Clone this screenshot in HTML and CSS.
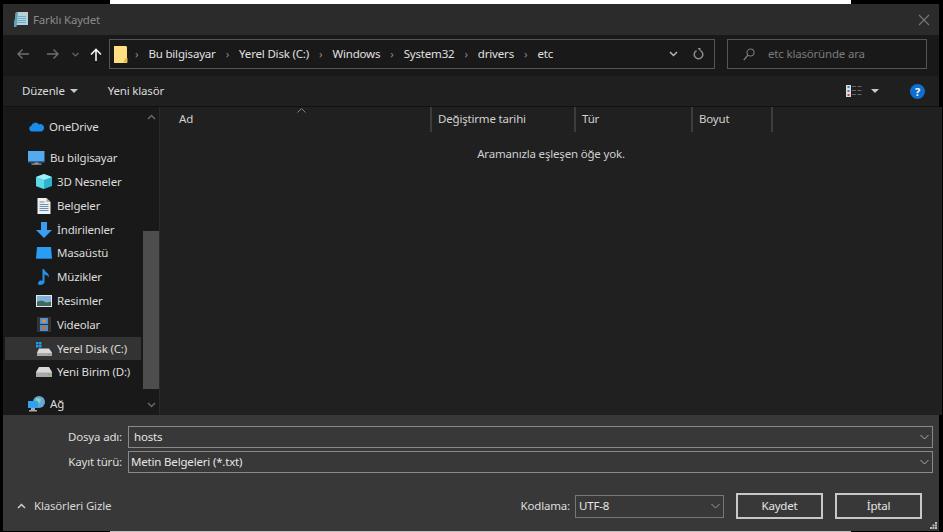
FILE: index.html
```html
<!DOCTYPE html>
<html lang="tr">
<head>
<meta charset="utf-8">
<title>Farklı Kaydet</title>
<link rel="stylesheet" href="styles.css">
</head>
<body>
<div class="strip strip-top"></div>
<div class="window">
  <header class="titlebar">
    <svg class="title-icon" width="16" height="17" viewBox="0 0 16 17"><path d="M3 1h12v13H1z" fill="#a9d6e6"/><path d="M3 1h12v2.500H2.600z" fill="#c9c9c9"/><path d="M5 5.500h8M4.600 7.500h8.400M4.300 9.500h8.700M4 11.500h9" stroke="#7ea9bb"/><path d="M3 1 1 14v2h2.500L5 1z" fill="#5d9fb5"/></svg>
    <span class="title-text">Farklı Kaydet</span>
    <svg class="close" width="12" height="12" viewBox="0 0 12 12"><path d="M1 1l10 10M11 1L1 11" stroke="#777" stroke-width="1.100"/></svg>
  </header>
  <nav class="navbar">
    <svg class="nav-btn" width="14" height="12" viewBox="0 0 14 12"><path d="M13 6H2M6.500 1.500 2 6l4.500 4.500" fill="none" stroke="#6f6f6f" stroke-width="1.400"/></svg>
    <svg class="nav-btn fwd" width="14" height="12" viewBox="0 0 14 12"><path d="M1 6h11M7.500 1.500 12 6l-4.500 4.500" fill="none" stroke="#6f6f6f" stroke-width="1.400"/></svg>
    <svg class="nav-btn drop" width="7" height="5" viewBox="0 0 7 5"><path d="M.5 1 3.500 4 6.500 1" fill="none" stroke="#666" stroke-width="1.200"/></svg>
    <svg class="nav-btn up" width="12" height="13" viewBox="0 0 12 13"><path d="M6 13V2M1 6.500 6 1.500l5 5" fill="none" stroke="#f2f2f2" stroke-width="1.600"/></svg>
    <div class="address">
      <svg class="addr-folder" width="14" height="17" viewBox="0 0 14 17"><path d="M0 0h12l1 1v16H0z" fill="#ffdf80"/><path d="M12 12h1.500v4.500H9z" fill="#e3b94e"/></svg>
      <span class="crumb-sep first">›</span>
      <span class="crumb">Bu bilgisayar</span><span class="crumb-sep">›</span>
      <span class="crumb">Yerel Disk (C:)</span><span class="crumb-sep">›</span>
      <span class="crumb">Windows</span><span class="crumb-sep">›</span>
      <span class="crumb">System32</span><span class="crumb-sep">›</span>
      <span class="crumb">drivers</span><span class="crumb-sep">›</span>
      <span class="crumb">etc</span>
      <svg class="addr-drop" width="9" height="6" viewBox="0 0 9 6"><path d="M1 1l3.500 3.500L8 1" fill="none" stroke="#b5b5b5" stroke-width="1.500"/></svg>
      <svg class="addr-refresh" width="11" height="12" viewBox="0 0 11 12"><path d="M7.500 2.600A4.300 4.300 0 1 1 3.500 2.600" fill="none" stroke="#8d8d8d" stroke-width="1.500"/><path d="M3.500 0l3 0 0 3.500z" fill="#8d8d8d" transform="translate(1 0)"/></svg>
    </div>
    <div class="search">
      <svg width="12" height="13" viewBox="0 0 12 13"><circle cx="7.500" cy="4.500" r="3.500" fill="none" stroke="#7a7a7a" stroke-width="1.100"/><path d="M5 7 .8 12" stroke="#7a7a7a" stroke-width="1.300"/></svg>
      <span>etc klasöründe ara</span>
    </div>
  </nav>
  <div class="toolbar">
    <span class="tool">Düzenle</span>
    <i class="caret"></i>
    <span class="tool new-folder">Yeni klasör</span>
    <svg class="view-icon" width="16" height="12" viewBox="0 0 16 12"><rect width="5" height="12" fill="#ddd"/><rect x="1.500" y="1" width="2" height="2" fill="#3b7fd0"/><rect x="1.500" y="5" width="2" height="2" fill="#3b7fd0"/><rect x="1.500" y="9" width="2" height="2" fill="#d33"/><path d="M6 1.500h4M11.500 1.500h4M6 5.500h4M11.500 5.500h4M6 9.500h4M11.500 9.500h4" stroke="#666"/></svg>
    <i class="caret view-caret"></i>
    <span class="help">?</span>
  </div>
  <div class="main">
    <aside class="sidebar">
      <ul class="tree">
        <li class="row group top"><svg width="16" height="11" viewBox="0 0 16 11"><path d="M3.500 10.500A3 3 0 0 1 3.300 4.700 4.300 4.300 0 0 1 11 3.500 3.500 3.500 0 0 1 16 7a3.500 3.500 0 0 1-3 3.500z" fill="#1a8ce8"/></svg><span>OneDrive</span></li>
        <li class="row group"><svg width="17" height="14" viewBox="0 0 17 14"><rect x="0" y="0" width="16.500" height="10.500" fill="#55a9ee"/><rect x="0" y="10.500" width="16.500" height="1" fill="#2f6fa8"/><path d="M6.500 11.500h4v1h3v1.300H3.500v-1.300h3z" fill="#9b9b9b"/></svg><span>Bu bilgisayar</span></li>
        <li class="row sub"><svg width="16" height="15" viewBox="0 0 16 15"><path d="M8 0l8 3v9l-8 3-8-3V3z" fill="#2bb4cf"/><path d="M8 0l8 3-8 3-8-3z" fill="#9ff0f5"/><path d="M0 3l8 3v9l-8-3z" fill="#5fd8e6"/></svg><span>3D Nesneler</span></li>
        <li class="row sub"><svg width="13" height="16" viewBox="0 0 13 16"><path d="M0 0h9l4 4v12H0z" fill="#f0f0f0"/><path d="M9 0l4 4H9z" fill="#aaa"/><path d="M2 4h5M2 6.500h9M2 8.500h9M2 10.500h9M2 12.500h9" stroke="#6a8fb5"/></svg><span>Belgeler</span></li>
        <li class="row sub"><svg width="16" height="16" viewBox="0 0 16 16"><path d="M5 0h6v8h5l-8 8-8-8h5z" fill="#3b9cf0"/></svg><span>İndirilenler</span></li>
        <li class="row sub"><svg width="16" height="12" viewBox="0 0 16 12"><path d="M1 0h14l1 12H0z" fill="#2a9cf2"/><path d="M0 11h16v1H0z" fill="#1678c4"/></svg><span>Masaüstü</span></li>
        <li class="row sub"><svg width="13" height="16" viewBox="0 0 13 16"><path d="M5 0h1.500c.5 3 5.500 4 5 8.500C10.800 6.500 8.500 6 7 5.500V13c0 2-2.500 3-4.500 3S0 14.500 1 13s3-1.700 4-1z" fill="#2293ec"/></svg><span>Müzikler</span></li>
        <li class="row sub"><svg width="16" height="12" viewBox="0 0 16 12"><rect width="16" height="12" fill="#e6e6e6"/><rect x="1" y="1" width="14" height="10" fill="#7fb3da"/><path d="M1 7c3-2 6-1 8 0s4 0 6-.5V11H1z" fill="#3f6a60"/></svg><span>Resimler</span></li>
        <li class="row sub"><svg width="14" height="15" viewBox="0 0 14 15"><rect width="14" height="15" fill="#333"/><rect x="3" y="1" width="8" height="6" fill="#4a8fd8"/><rect x="3" y="8" width="8" height="6" fill="#4a8fd8"/><rect x="5" y="2.500" width="4" height="3" fill="#d9933a"/><rect x="5" y="9.500" width="4" height="3" fill="#c9702a"/></svg><span>Videolar</span></li>
        <li class="row sub selected"><svg width="16" height="14" viewBox="0 0 16 14"><path d="M0 0h2.500v2.500H0zM3 0h2.500v2.500H3zM0 3h2.500v2.500H0zM3 3h2.500v2.500H3z" fill="#18a0e8"/><path d="M3 6.500h10l3 4V14H1v-3.500z" fill="#d8d8d8"/><path d="M1 11h15v3H1z" fill="#a8a8a8"/><path d="M12 12h2v1h-2z" fill="#4fbf4f"/></svg><span>Yerel Disk (C:)</span></li>
        <li class="row sub"><svg width="16" height="10" viewBox="0 0 16 10"><path d="M3 0h10l3 5v5H0V5z" fill="#d8d8d8"/><path d="M0 5.500h16V10H0z" fill="#a8a8a8"/><path d="M12 7h2v1h-2z" fill="#4fbf4f"/></svg><span>Yeni Birim (D:)</span></li>
        <li class="row group"><svg width="17" height="16" viewBox="0 0 17 16"><circle cx="11" cy="6" r="6" fill="#5fa8e0"/><path d="M8 2l5 1-1 4-4-1z" fill="#9ad09a"/><rect x="0" y="5" width="10" height="7" fill="#2fa3f0"/><path d="M3 12h4v2h2v1.500H1V14h2z" fill="#aaa"/></svg><span>Ağ</span></li>
      </ul>
      <div class="scrollbar">
        <svg class="sb-arrow" width="9" height="6" viewBox="0 0 9 6"><path d="M1 5l3.500-3.500L8 5" fill="none" stroke="#666" stroke-width="1.500"/></svg>
        <div class="sb-track"><div class="sb-thumb"></div></div>
        <svg class="sb-arrow" width="9" height="6" viewBox="0 0 9 6"><path d="M1 1l3.500 3.500L8 1" fill="none" stroke="#666" stroke-width="1.500"/></svg>
      </div>
    </aside>
    <section class="content">
      <div class="columns">
        <div class="col col-name">Ad<svg class="sort" width="9" height="5" viewBox="0 0 9 5"><path d="M.5 4.500l4-4 4 4" fill="none" stroke="#888"/></svg></div>
        <div class="col col-date">Değiştirme tarihi</div>
        <div class="col col-type">Tür</div>
        <div class="col col-size">Boyut</div>
      </div>
      <p class="empty">Aramanızla eşleşen öğe yok.</p>
    </section>
  </div>
  <footer class="panel">
    <div class="field">
      <label>Dosya adı:</label>
      <div class="combo"><span class="combo-name">hosts</span><svg width="9" height="6" viewBox="0 0 9 6"><path d="M.5 1l4 4 4-4" fill="none" stroke="#aaa"/></svg></div>
    </div>
    <div class="field second">
      <label>Kayıt türü:</label>
      <div class="combo"><span>Metin Belgeleri (*.txt)</span><svg width="9" height="6" viewBox="0 0 9 6"><path d="M.5 1l4 4 4-4" fill="none" stroke="#aaa"/></svg></div>
    </div>
    <div class="actions">
      <svg class="hide-chev" width="9" height="6" viewBox="0 0 9 6"><path d="M1 5l3.500-3.500L8 5" fill="none" stroke="#cfcfcf" stroke-width="1.500"/></svg>
      <span class="hide-text">Klasörleri Gizle</span>
      <span class="enc-label">Kodlama:</span>
      <div class="enc"><span>UTF-8</span><svg width="9" height="6" viewBox="0 0 9 6"><path d="M.5 1l4 4 4-4" fill="none" stroke="#999"/></svg></div>
      <button class="btn save">Kaydet</button>
      <button class="btn">İptal</button>
    </div>
    <svg class="grip" width="7" height="7" viewBox="0 0 7 7"><path d="M5 0h2v2H5zM2.500 2.500h2v2h-2zM5 2.500h2v2H5zM0 5h2v2H0zM2.500 5h2v2h-2zM5 5h2v2H5z" fill="#bbb"/></svg>
  </footer>
</div>
<div class="strip strip-bottom"></div>
</body>
</html>
```
FILE: styles.css
```css
* { box-sizing: border-box; }
html, body { margin: 0; height: 532px; overflow: hidden; background: #000; }
body { font: 11.5px/16px "Noto Sans", "Open Sans", sans-serif; letter-spacing: -0.18px; color: #d6d6d6; }
ul, p { margin: 0; padding: 0; list-style: none; }
svg { flex: none; display: block; }

.strip { margin-left: 110px; width: 741px; background: #fff; }
.strip-top { height: 4px; }
.strip-bottom { height: 1px; background: #bdbdbd; }

.window { width: 936px; height: 527px; margin-left: 3px; display: flex; flex-direction: column; background: #202020; }

.titlebar { height: 31px; background: #2b2b2b; display: flex; align-items: center; padding: 0 9px 0 10px; }
.title-icon { margin-right: 4px; }
.title-text { color: #8a8a8a; }
.close { margin-left: auto; }

.navbar { height: 41px; background: #191919; display: flex; align-items: center; padding: 4px 12px 7px 13px; }
.nav-btn.fwd { margin-left: 16px; }
.nav-btn.drop { margin-left: 12px; }
.nav-btn.up { margin-left: 11px; }
.address { width: 606px; height: 30px; margin-left: 7px; border: 1px solid #555; display: flex; align-items: center; padding: 0 0 0 4px; }
.crumb { color: #e0e0e0; white-space: nowrap; }
.crumb-sep { color: #888; margin: 0 10px; }
.crumb-sep.first { margin: 0 10px 0 7px; }
.addr-drop { margin-left: auto; margin-right: 15px; }
.addr-refresh { margin-right: 10px; }
.search { width: 200px; height: 30px; margin-left: 12px; border: 1px solid #555; display: flex; align-items: center; gap: 13px; padding-left: 15px; color: #7b7b7b; }

.toolbar { height: 30px; background: #1f1f1f; display: flex; align-items: center; padding: 0 0 0 19px; }
.tool { color: #dcdcdc; }
.caret { width: 0; height: 0; border: 4.500px solid transparent; border-top: 4px solid #c8c8c8; border-bottom: 0; margin-left: 5px; }
.new-folder { margin-left: 30px; }
.view-icon { margin-left: auto; }
.view-caret { margin-left: 9px; }
.help { width: 15px; height: 15px; margin: 0 14px 0 31px; border-radius: 50%; background: #0f6fd0; color: #fff; font-weight: 700; font-size: 11px; line-height: 15px; text-align: center; }

.main { flex: 1; min-height: 0; display: flex; border-top: 1px solid #111; }
.sidebar { width: 157px; background: #191919; display: flex; }
.tree { width: 140px; }
.row { height: 23.8px; display: flex; align-items: center; color: #dcdcdc; padding-left: 25px; }
.row svg { margin-right: 5px; }
.row.sub { padding-left: 33px; }
.row.sub svg { width: 16px; margin-right: 5px; }
.row.group { margin-top: 7.500px; }
.row.group.top { margin-top: 8px; }
.row.selected { margin-left: 2px; padding-left: 31px; background: #333; width: 136px; }
.scrollbar { width: 16px; display: flex; flex-direction: column; align-items: center; padding-top: 7px; padding-bottom: 7px; }
.sb-track { flex: 1; width: 100%; padding-top: 111px; padding-bottom: 13px; display: flex; }
.sb-thumb { width: 100%; background: #4d4d4d; }
.content { flex: 1; border-left: 1px solid #2a2a2a; background: #202020; }
.columns { height: 25px; display: flex; }
.col { border-right: 2px solid #3d3d3d; padding: 4px 0 0 6px; color: #d0d0d0; position: relative; }
.col-name { width: 272px; padding-left: 19px; }
.col-date { width: 144px; }
.col-type { width: 117px; }
.col-size { width: 80px; }
.sort { position: absolute; left: 137px; top: 1px; }
.empty { text-align: center; margin-top: 14px; width: 782px; color: #cfcfcf; }

.panel { height: 116px; background: #383838; position: relative; padding: 11px 6px 0 0; display: flex; flex-direction: column; }
.field { display: flex; align-items: center; height: 22px; }
.field.second { margin-top: 3px; }
.field label { width: 119px; text-align: right; margin-right: 6px; color: #dedede; }
.combo { flex: 1; height: 100%; border: 1px solid #8a8a8a; display: flex; align-items: center; justify-content: space-between; padding: 0 3px 0 2px; color: #e6e6e6; }
.combo-name { margin-left: 3px; }
.actions { display: flex; align-items: center; margin-top: 20px; padding-left: 14px; }
.hide-text { margin-left: 8px; color: #d6d6d6; }
.enc-label { margin-left: auto; margin-right: 5px; color: #dedede; }
.enc { width: 149px; height: 23px; border: 1px solid #777; display: flex; align-items: center; justify-content: space-between; padding: 0 3px 0 3px; color: #e6e6e6; }
.btn { width: 87px; height: 26px; margin-left: 12px; background: #383838; border: 2px solid #c8c8c8; color: #e6e6e6; font: inherit; letter-spacing: inherit; padding: 0; }
.btn:last-of-type { margin-right: 11px; }
.grip { position: absolute; right: 2px; bottom: 2px; }
```
